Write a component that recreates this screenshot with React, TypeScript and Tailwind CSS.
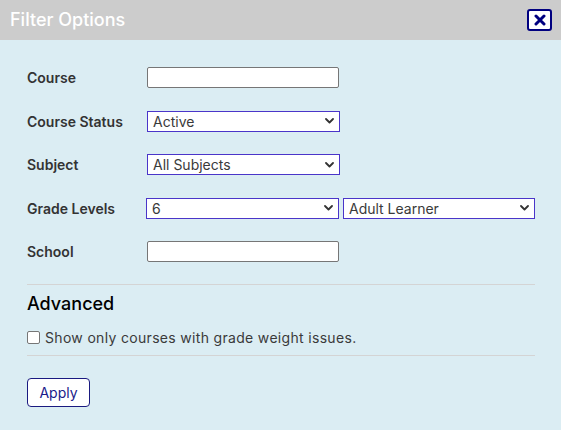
import React from "react";

function Chevron() {
  return (
    <svg width="9" height="6" viewBox="0 0 9 6" className="absolute right-[6px] top-1/2 -translate-y-1/2 pointer-events-none">
      <path d="M1 1 L4.5 4.5 L8 1" fill="none" stroke="#333" strokeWidth="1.8" strokeLinecap="round" strokeLinejoin="round" />
    </svg>
  );
}

function Select({ value, width }: { value: string; width: string }) {
  return (
    <div className={`relative h-[21px] ${width}`}>
      <div className="h-full w-full border border-[#4a35c9] bg-white pl-[5px] flex items-center text-[14px] text-[#3a3a3a]">
        {value}
      </div>
      <Chevron />
    </div>
  );
}

function TextBox() {
  return <div className="h-[21px] w-[192px] border border-[#767676] rounded-[2px] bg-white" />;
}

function Row({ label, children }: { label: string; children: React.ReactNode }) {
  return (
    <div className="flex items-center h-[21px]">
      <div className="w-[120px] text-[14px] font-semibold text-[#333]">{label}</div>
      <div className="flex gap-[4px]">{children}</div>
    </div>
  );
}

export default function App() {
  return (
    <div
      className="w-[561px] h-[430px] bg-[#dbedf3] flex flex-col"
      style={{ fontFamily: "Inter, 'Noto Sans', sans-serif" }}
    >
      <div className="h-10 bg-[#cccccc] flex items-center justify-between pl-[10px] pr-[9px]">
        <div className="text-[18px] font-medium text-white leading-none">Filter Options</div>
        <button className="w-[25px] h-[22px] border-2 border-[#000080] rounded-[3px] bg-white flex items-center justify-center">
          <svg width="12" height="12" viewBox="0 0 12 12">
            <path d="M2 2 L10 10 M10 2 L2 10" stroke="#000080" strokeWidth="3" strokeLinecap="round" />
          </svg>
        </button>
      </div>
      <div className="pl-[27px] pr-[26px] pt-[27px] flex flex-col">
        <div className="flex flex-col gap-[22.5px]">
          <Row label="Course">
            <TextBox />
          </Row>
          <Row label="Course Status">
            <Select value="Active" width="w-[193px]" />
          </Row>
          <Row label="Subject">
            <Select value="All Subjects" width="w-[193px]" />
          </Row>
          <Row label="Grade Levels">
            <Select value="6" width="w-[193px]" />
            <Select value="Adult Learner" width="w-[192px]" />
          </Row>
          <Row label="School">
            <TextBox />
          </Row>
        </div>
        <div className="mt-[22px] h-px bg-[#d4d4d4]" />
        <div className="mt-[8px] text-[18px] leading-[22px] font-medium text-black">Advanced</div>
        <label className="mt-[12px] h-[20px] flex items-center">
          <span className="w-[13px] h-[13px] border border-[#767676] rounded-[2px] bg-white" />
          <span className="ml-[5px] text-[14px] text-[#3a3a3a] tracking-[0.32px]">Show only courses with grade weight issues.</span>
        </label>
        <div className="mt-[8px] h-px bg-[#d4d4d4]" />
        <button className="mt-[22px] w-[63px] h-[29px] border-[1.5px] border-[#1a1a80] rounded-[4px] bg-white text-[14px] text-[#1a1a8a] font-normal flex items-center justify-center">
          Apply
        </button>
      </div>
    </div>
  );
}
